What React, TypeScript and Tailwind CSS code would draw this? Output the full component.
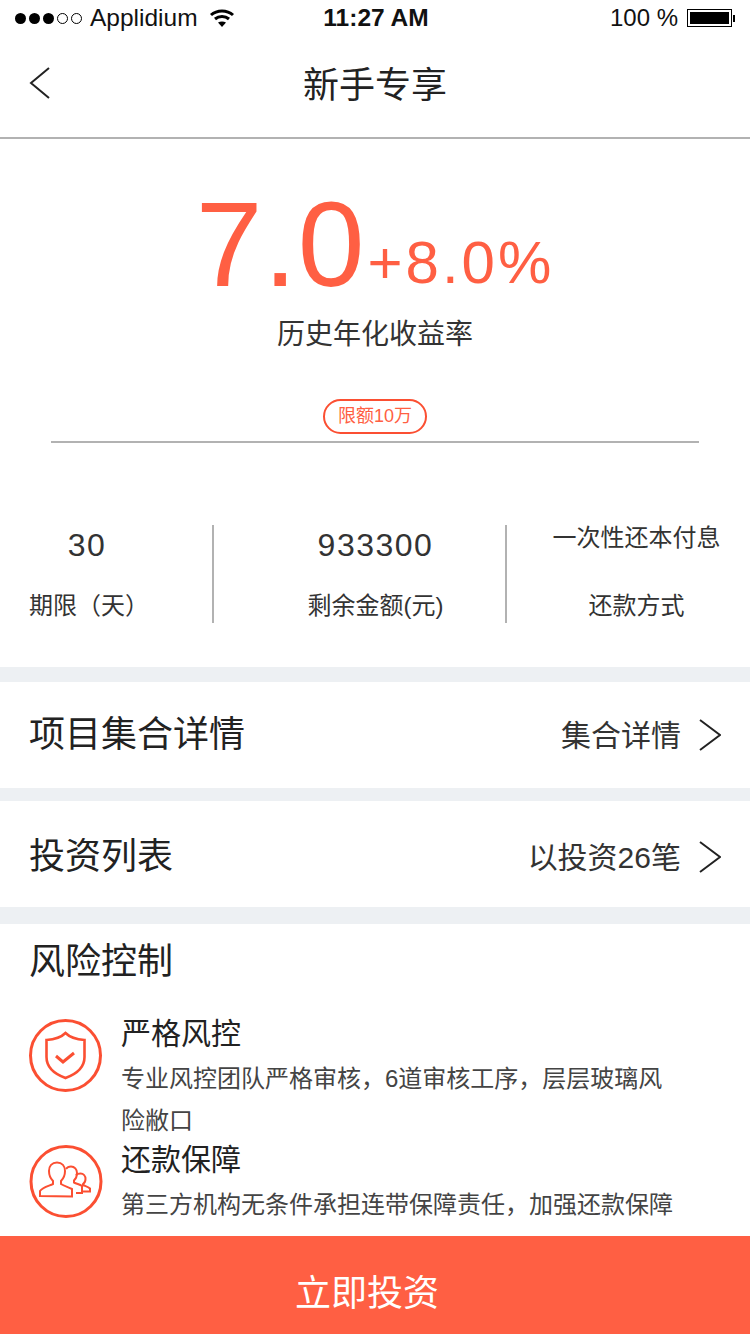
import React from 'react';

const cjk = "font-['Liberation_Sans','Noto_Sans_CJK_SC',sans-serif]";

const ShieldIcon = () => (
  <svg width="74" height="74" viewBox="0 0 74 74" fill="none" stroke="#fb4f32" strokeWidth="2.6">
    <circle cx="36.5" cy="36.5" r="35" strokeWidth="3" />
    <path d="M36.500 14c-4 4-11 6.500-19 7v17c0 10 8 17 19 21 11-4 19-11 19-21v-17c-8-.5-15-3-19-7z" />
    <path d="M27 37l7 6 11-9" strokeWidth="3" />
  </svg>
);

const PeopleIcon = () => (
  <svg width="74" height="74" viewBox="0 0 74 74" fill="none" stroke="#fb4f32" strokeWidth="2">
    <circle cx="37" cy="36.500" r="35" strokeWidth="3" />
    <path d="M11 51v-5c3-4 9-5 13-7v-3c-2-2-4-5-4-10 0-5 3-8.500 8-8.500s8 3.500 8 8.500c0 5-2 8-4 10v3c3 2 7 3 11 5v7.500z" />
    <path d="M37 24c1-1.500 3-2.500 5-2.500 3.500 0 6 3 6 6.500 0 3-1 5.500-3 7.500v2c3 1.500 6 2 8 3.500v7h-6" />
    <path d="M47 30c1-1 3-1.500 4.500-1.500 3 0 5 2.500 5 5.500 0 2-1 4-2.500 5v1c2 1 5 1.500 7 3.500v3h-8" />
  </svg>
);

const RightArrow = () => (
  <svg width="22" height="32" viewBox="0 0 22 32" fill="none" stroke="#222" strokeWidth="2">
    <path d="M1 1l20 15-20 15" />
  </svg>
);

const Stat = ({ value, label, className, labelClass }: { value: string; label: string; className: string; labelClass?: string }) => (
  <div className={`flex flex-col ${className}`}>
    <div className="flex h-[40px] items-center justify-center text-[32px] tracking-[1.5px] text-[#333]">{value}</div>
    <div className={`mt-[24px] text-center text-[24px] leading-[34px] text-[#333] ${labelClass ?? ''}`}>{label}</div>
  </div>
);

const LinkRow = ({ title, extra, className }: { title: string; extra: string; className: string }) => (
  <div className={`flex items-center justify-between bg-white pl-[29px] pr-[29px] ${className}`}>
    <span className="text-[36px] text-[#222]">{title}</span>
    <div className="flex items-center gap-[18px]">
      <span className="text-[30px] text-[#333]">{extra}</span>
      <RightArrow />
    </div>
  </div>
);

const RiskItem = ({ icon, title, lines, className }: { icon: React.ReactNode; title: string; lines: string[]; className?: string }) => (
  <div className={`flex gap-[18px] ${className ?? ''}`}>
    <div className="shrink-0 pt-[5px]">{icon}</div>
    <div className="w-[570px]">
      <div className="text-[30px] leading-[40px] text-[#222]">{title}</div>
      <div className="pt-[2px]">
        {lines.map((line) => (
          <div key={line} className="mt-[4px] text-[24px] leading-[38px] text-[#444]">{line}</div>
        ))}
      </div>
    </div>
  </div>
);

export default function App() {
  return (
    <div className={`relative h-[1334px] w-[750px] overflow-hidden bg-white ${cjk}`}>
      <div className="flex h-[40px] items-center justify-between pb-[4px] pl-[15px] pr-[15px] text-[24.5px] text-[#111]">
        <div className="flex w-[260px] items-center">
          <div className="flex gap-[3px]">
            <span className="h-[11px] w-[11px] rounded-full bg-black" />
            <span className="h-[11px] w-[11px] rounded-full bg-black" />
            <span className="h-[11px] w-[11px] rounded-full bg-black" />
            <span className="h-[11px] w-[11px] rounded-full border border-black" />
            <span className="h-[11px] w-[11px] rounded-full border border-black" />
          </div>
          <span className="ml-[8px]">Applidium</span>
          <svg width="26" height="20" viewBox="0 0 26 20" className="ml-[11px]" fill="none" stroke="#000" strokeWidth="3">
            <path d="M2 7c6-5.500 16-5.500 22 0" />
            <path d="M6 11c4-3.500 10-3.500 14 0" />
            <path d="M13 19l-4-4.500c2.500-1.500 5.500-1.500 8 0z" fill="#000" stroke="none" />
          </svg>
        </div>
        <span className="ml-[2px] text-[24.5px] font-bold">11:27 AM</span>
        <div className="flex w-[260px] items-center justify-end">
          <span className="text-[24px]">100 %</span>
          <div className="ml-[9px] flex h-[18px] w-[45px] items-center border border-black p-[2px]">
            <div className="h-full w-full bg-black" />
          </div>
          <div className="ml-[1px] h-[7px] w-[2px] bg-black" />
        </div>
      </div>

      <div className="relative flex h-[99px] items-center justify-center border-b-2 border-[#b2b2b2] pb-[6px]">
        <svg width="22" height="32" viewBox="0 0 22 32" fill="none" stroke="#222" strokeWidth="2" className="absolute left-[29px] top-[27px]">
          <path d="M20 1L2 16l18 15" />
        </svg>
        <span className="text-[36px] text-[#222]">新手专享</span>
      </div>

      <div className="flex flex-col items-center">
        <div className="mt-[38px] flex h-[137px] items-end text-[#ff5f43]">
          <span className="mr-[2px] text-[120px] leading-[140px] tracking-[1px]">7.0</span>
          <span className="mb-[11px] text-[60px] leading-[80px] tracking-[3px]">+8.0%</span>
        </div>
        <div className="mt-[1px] text-[28px] leading-[40px] text-[#333]">历史年化收益率</div>
        <div className="mt-[44px] flex h-[35px] w-[104px] items-center justify-center rounded-full border-2 border-[#fb4f32] text-[18px] text-[#ff5f43]">限额10万</div>
        <div className="mt-[7px] h-[2px] w-[648px] bg-[#b2b2b2]" />
      </div>

      <div className="mt-[82px] flex h-[98px] items-stretch">
        <Stat value="30" label="期限（天）" className="w-[172px] pl-[2px]" labelClass="pl-[4px]" />
        <div className="ml-[40px] w-[2px] bg-[#b2b2b2]" />
        <Stat value="933300" label="剩余金额(元)" className="w-[291px] pl-[32px]" />
        <div className="w-[2px] bg-[#b2b2b2]" />
        <div className="flex flex-1 flex-col items-center pl-[16px] text-[#333]">
          <div className="h-[26px] text-[24px] leading-[26px]">一次性还本付息</div>
          <div className="mt-[38px] text-[24px] leading-[34px]">还款方式</div>
        </div>
      </div>

      <div className="mt-[44px] bg-[#edf0f3] pb-[17px] pt-[15px]">
        <LinkRow title="项目集合详情" extra="集合详情" className="h-[106px]" />
        <LinkRow title="投资列表" extra="以投资26笔" className="mt-[13px] h-[106px] pt-[6px]" />
      </div>

      <div className="px-[29px]">
        <div className="mt-[14px] text-[36px] leading-[48px] text-[#222]">风险控制</div>
        <RiskItem className="mt-[28px]" icon={<ShieldIcon />} title="严格风控" lines={['专业风控团队严格审核，6道审核工序，层层玻璃风', '险敝口']} />
        <RiskItem icon={<PeopleIcon />} title="还款保障" lines={['第三方机构无条件承担连带保障责任，加强还款保障']} />
      </div>

      <div className="absolute bottom-0 left-0 flex h-[98px] w-full items-center justify-center bg-[#ff5f43] pr-[16px] pt-[18px] text-[36px] text-[#fff]">立即投资</div>
    </div>
  );
}
